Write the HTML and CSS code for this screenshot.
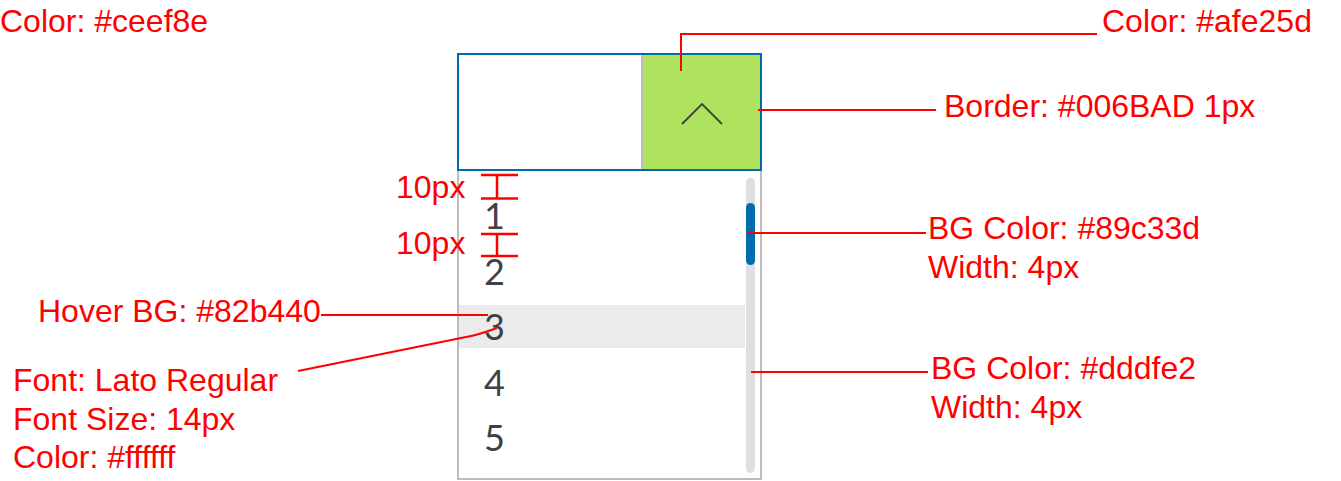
FILE: index.html
```html
<!DOCTYPE html>
<html lang="en">
<head>
    <meta charset="UTF-8">
    <meta name="viewport" content="width=device-width, initial-scale=1.0">
    <title>Dropdown Spec</title>
    <link rel="stylesheet" href="styles.css">
</head>
<body>
    <div class="canvas">
        <!-- The dropdown itself -->
        <div class="dropdown">
            <div class="dropdown-head">
                <div class="dropdown-value"></div>
                <div class="dropdown-toggle">
                    <svg class="chevron" width="42" height="22" viewBox="0 0 42 22">
                        <polyline points="1,21 21,1 41,21" />
                    </svg>
                </div>
            </div>
            <div class="dropdown-list">
                <ul class="options">
                    <li>1</li>
                    <li>2</li>
                    <li class="hover">3</li>
                    <li>4</li>
                    <li>5</li>
                </ul>
                <div class="scrollbar">
                    <div class="thumb"></div>
                </div>
            </div>
        </div>

        <!-- Leader lines -->
        <svg class="leaders" width="1341" height="481" viewBox="0 0 1341 481">
            <polyline points="681,71 681,34 1097,34" />
            <line x1="758" y1="110" x2="936" y2="110" />
            <line x1="748" y1="233" x2="926" y2="233" />
            <line x1="751" y1="372" x2="928" y2="372" />
            <line x1="321" y1="315" x2="488" y2="315" />
            <path d="M298,371 L466,337 Q478,335 497,328" />
            <g class="ibeam">
                <line x1="481" y1="175" x2="518" y2="175" />
                <line x1="481" y1="198.5" x2="518" y2="198.5" />
                <line x1="497" y1="175" x2="497" y2="198.5" />
                <line x1="481" y1="234" x2="518" y2="234" />
                <line x1="481" y1="256" x2="518" y2="256" />
                <line x1="497" y1="234" x2="497" y2="256" />
            </g>
        </svg>

        <!-- Annotations -->
        <div class="note note-color-left">Color: #ceef8e</div>
        <div class="note note-color-right">Color: #afe25d</div>
        <div class="note note-border">Border: #006BAD 1px</div>
        <div class="note note-gap-1">10px</div>
        <div class="note note-gap-2">10px</div>
        <div class="note note-hover">Hover BG: #82b440</div>
        <div class="note note-font">Font: Lato Regular<br>Font Size: 14px<br>Color: #ffffff</div>
        <div class="note note-thumb">BG Color: #89c33d<br>Width: 4px</div>
        <div class="note note-track">BG Color: #dddfe2<br>Width: 4px</div>
    </div>
</body>
</html>
```

FILE: styles.css
```css
/* Page */
body {
    margin: 0;
    background-color: #ffffff;
    font-family: 'Liberation Sans', Arial, sans-serif;
}

.canvas {
    position: relative;
    width: 1341px;
    height: 481px;
    overflow: hidden;
    padding: 53px 0 0 457px;
    box-sizing: border-box;
}

/* Dropdown header */
.dropdown {
    width: 305px;
}

.dropdown-head {
    display: flex;
    height: 118px;
    border: 2px solid #006bad;
    box-sizing: border-box;
}

.dropdown-value {
    flex: 1;
    background-color: #ffffff;
    border-right: 2px solid #bdbdbd;
}

.dropdown-toggle {
    width: 117px;
    background-color: #afe25d;
    display: flex;
    justify-content: center;
    align-items: center;
}

.chevron {
    margin-top: 4px;
}

.chevron polyline {
    fill: none;
    stroke: #404040;
    stroke-width: 1.8;
}

/* Dropdown list */
.dropdown-list {
    display: flex;
    height: 309px;
    border: 2px solid #bdbdbd;
    border-top: none;
    box-sizing: border-box;
}

.options {
    flex: 1;
    list-style: none;
    margin: 0;
    padding: 23px 0 0 0;
}

.options li {
    height: 43px;
    line-height: 43px;
    margin-bottom: 12.6px;
    padding-left: 25px;
    font-family: Lato, sans-serif;
    font-size: 36px;
    color: #3e4147;
}

.options li.hover {
    background-color: #ebebeb;
}

.scrollbar {
    width: 9px;
    margin: 7px 5px 5px 1px;
    border-radius: 5px;
    background-color: #dddfe2;
}

.thumb {
    height: 62px;
    margin-top: 25px;
    border-radius: 5px;
    background-color: #006bad;
}

/* Leader lines */
.leaders {
    position: absolute;
    left: 0;
    top: 0;
}

.leaders line,
.leaders polyline,
.leaders path {
    fill: none;
    stroke: #ff0000;
    stroke-width: 2;
}

.leaders .ibeam line {
    stroke-width: 2.5;
}

/* Annotation labels */
.note {
    position: absolute;
    color: #ff0000;
    font-size: 32px;
    line-height: 38.5px;
    white-space: nowrap;
}

.note-color-left { left: 0; top: 2px; }
.note-color-right { left: 1102px; top: 2px; }
.note-border { left: 944px; top: 87px; }
.note-gap-1 { left: 396px; top: 168px; }
.note-gap-2 { left: 396px; top: 224px; }
.note-hover { left: 38px; top: 292px; }
.note-font { left: 13px; top: 361px; }
.note-thumb { left: 928px; top: 209px; }
.note-track { left: 931px; top: 349px; }
```
